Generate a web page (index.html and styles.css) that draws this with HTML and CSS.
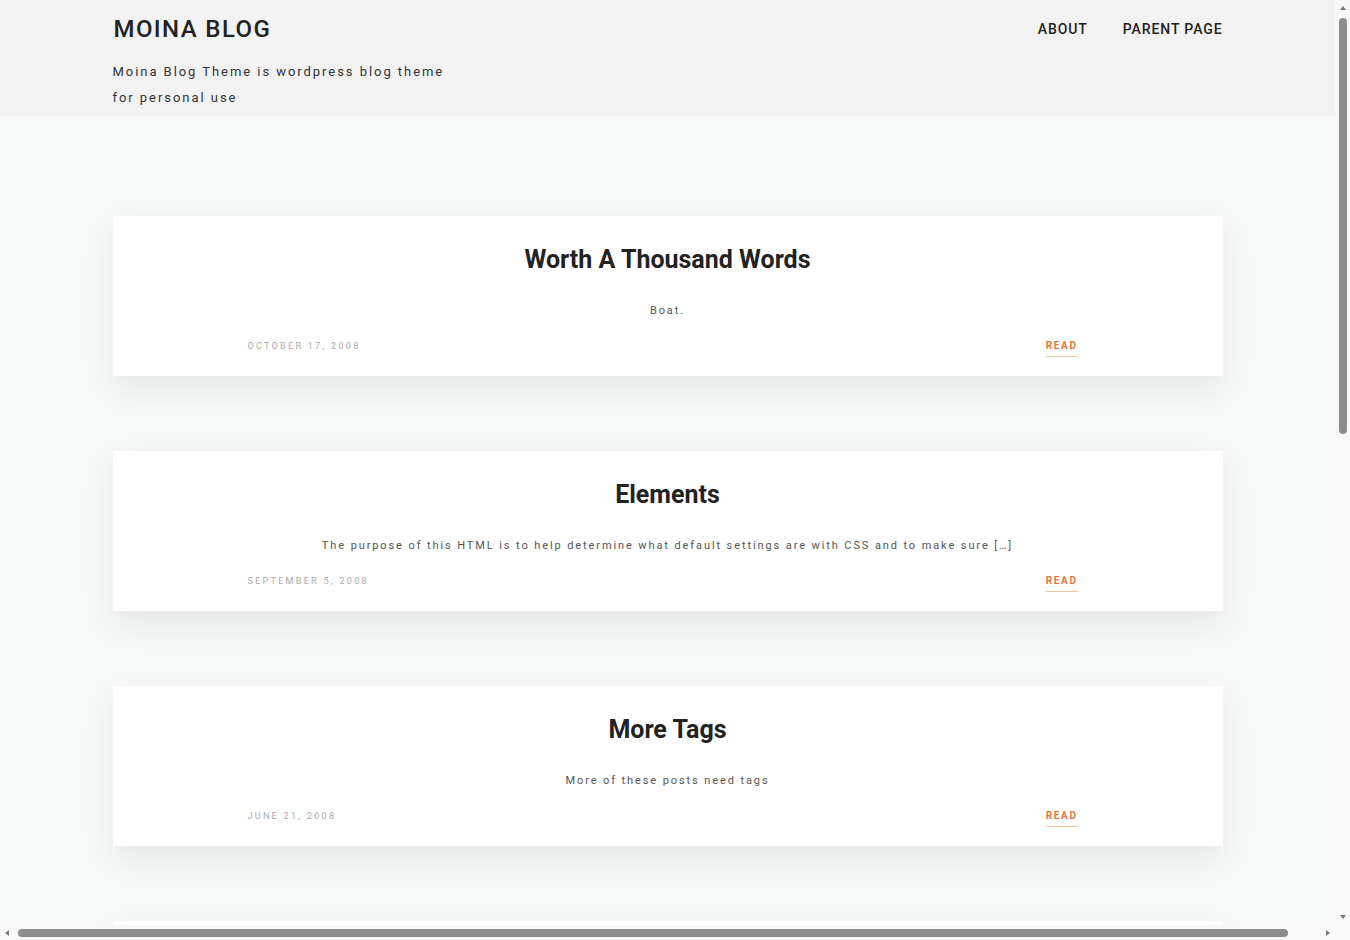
FILE: index.html
```html
<!DOCTYPE html>
<html lang="en">
<head>
<meta charset="utf-8">
<title>Moina Blog</title>
<link rel="stylesheet" href="styles.css">
</head>
<body>
<div class="page">
  <header class="site-header">
    <div class="container header-row">
      <div class="branding">
        <h1 class="site-title">MOINA BLOG</h1>
        <p class="site-desc">Moina Blog Theme is wordpress blog theme for personal use</p>
      </div>
      <nav class="main-nav">
        <a href="#">About</a>
        <a href="#">Parent Page</a>
      </nav>
    </div>
  </header>
  <main class="container posts">
    <article class="card">
      <h2 class="card-title">Worth A Thousand Words</h2>
      <p class="card-excerpt">Boat.</p>
      <div class="card-meta"><span class="date">October 17, 2008</span><a class="read" href="#">Read</a></div>
    </article>
    <article class="card">
      <h2 class="card-title">Elements</h2>
      <p class="card-excerpt">The purpose of this HTML is to help determine what default settings are with CSS and to make sure [&hellip;]</p>
      <div class="card-meta"><span class="date">September 5, 2008</span><a class="read" href="#">Read</a></div>
    </article>
    <article class="card">
      <h2 class="card-title">More Tags</h2>
      <p class="card-excerpt">More of these posts need tags</p>
      <div class="card-meta"><span class="date">June 21, 2008</span><a class="read" href="#">Read</a></div>
    </article>
    <article class="card">
      <h2 class="card-title">Hello World</h2>
      <p class="card-excerpt">Welcome to WordPress. This is your first post.</p>
      <div class="card-meta"><span class="date">May 12, 2008</span><a class="read" href="#">Read</a></div>
    </article>
  </main>
</div>
<div class="vscroll" aria-hidden="true">
  <span class="arrow arrow-up"></span>
  <span class="vthumb"></span>
  <span class="arrow arrow-down"></span>
</div>
<div class="hscroll" aria-hidden="true">
  <span class="arrow arrow-left"></span>
  <span class="hthumb"></span>
  <span class="arrow arrow-right"></span>
</div>
</body>
</html>
```
FILE: styles.css
```css
html, body {
  margin: 0;
  padding: 0;
}
body {
  background: #f7f8f8;
  font-family: Roboto, "Liberation Sans", sans-serif;
  color: #222;
}
.page {
  margin-right: 15px;
}
.container {
  width: 1110px;
  margin: 0 auto;
}
.site-header {
  background: #f2f2f2;
  height: 116px;
}
.header-row {
  display: flex;
  justify-content: space-between;
  align-items: flex-start;
}
.site-title {
  margin: 0;
  padding-top: 14px;
  padding-left: 1px;
  font-size: 24px;
  font-weight: 500;
  letter-spacing: 1.4px;
  line-height: 30px;
  color: #222;
}
.site-desc {
  margin: 15px 0 0;
  width: 350px;
  font-size: 13px;
  line-height: 26px;
  letter-spacing: 1.95px;
  color: #333;
}
.main-nav {
  display: flex;
  gap: 35px;
  padding-top: 19px;
}
.main-nav a {
  text-decoration: none;
  text-transform: uppercase;
  color: #222;
  font-size: 14px;
  font-weight: 500;
  letter-spacing: 0.9px;
  line-height: 20px;
}
.posts {
  padding-top: 100px;
  display: flex;
  flex-direction: column;
  gap: 75px;
  padding-bottom: 75px;
}
.card {
  background: #fff;
  height: 160px;
  box-sizing: border-box;
  padding: 28px 134px 0;
  box-shadow: 0 12px 32px rgba(0, 0, 0, 0.08);
  text-align: center;
}
.card-title {
  margin: 0;
  font-size: 25px;
  font-weight: 700;
  line-height: 32px;
  color: #222;
}
.card-excerpt {
  margin: 27px 0 0;
  font-size: 11px;
  line-height: 16px;
  letter-spacing: 1.9px;
  color: #555;
}
.card-meta {
  display: flex;
  justify-content: space-between;
  align-items: flex-start;
  margin-top: 20px;
  padding: 0 11px 0 1px;
}
.date {
  font-size: 9px;
  line-height: 14px;
  letter-spacing: 2.3px;
  text-transform: uppercase;
  color: #aaa;
}
.read {
  font-size: 10px;
  line-height: 14px;
  font-weight: 700;
  letter-spacing: 1.6px;
  text-transform: uppercase;
  color: #e0773f;
  text-decoration: none;
  padding-bottom: 3px;
  border-bottom: 1px solid #f3c2a5;
}

/* scrollbars (overlay) */
.vscroll {
  position: fixed;
  top: 0;
  right: 0;
  width: 15px;
  bottom: 15px;
  background: #f8f8f8;
}
.vthumb {
  position: absolute;
  left: 4px;
  width: 8px;
  top: 18px;
  height: 416px;
  border-radius: 4px;
  background: #8c8c8c;
}
.hscroll {
  position: fixed;
  left: 0;
  right: 0;
  bottom: 0;
  height: 15px;
  background: #f8f8f8;
}
.hthumb {
  position: absolute;
  top: 4px;
  height: 8px;
  left: 18px;
  width: 1270px;
  border-radius: 4px;
  background: #8c8c8c;
}
.arrow {
  position: absolute;
  width: 0;
  height: 0;
}
.arrow-up {
  top: 6px;
  left: 5px;
  border-left: 3px solid transparent;
  border-right: 3px solid transparent;
  border-bottom: 4px solid #777;
}
.arrow-down {
  bottom: 6px;
  left: 5px;
  border-left: 3px solid transparent;
  border-right: 3px solid transparent;
  border-top: 4px solid #777;
}
.arrow-left {
  left: 5px;
  top: 5px;
  border-top: 3px solid transparent;
  border-bottom: 3px solid transparent;
  border-right: 4px solid #777;
}
.arrow-right {
  right: 20px;
  top: 5px;
  border-top: 3px solid transparent;
  border-bottom: 3px solid transparent;
  border-left: 4px solid #777;
}
```
